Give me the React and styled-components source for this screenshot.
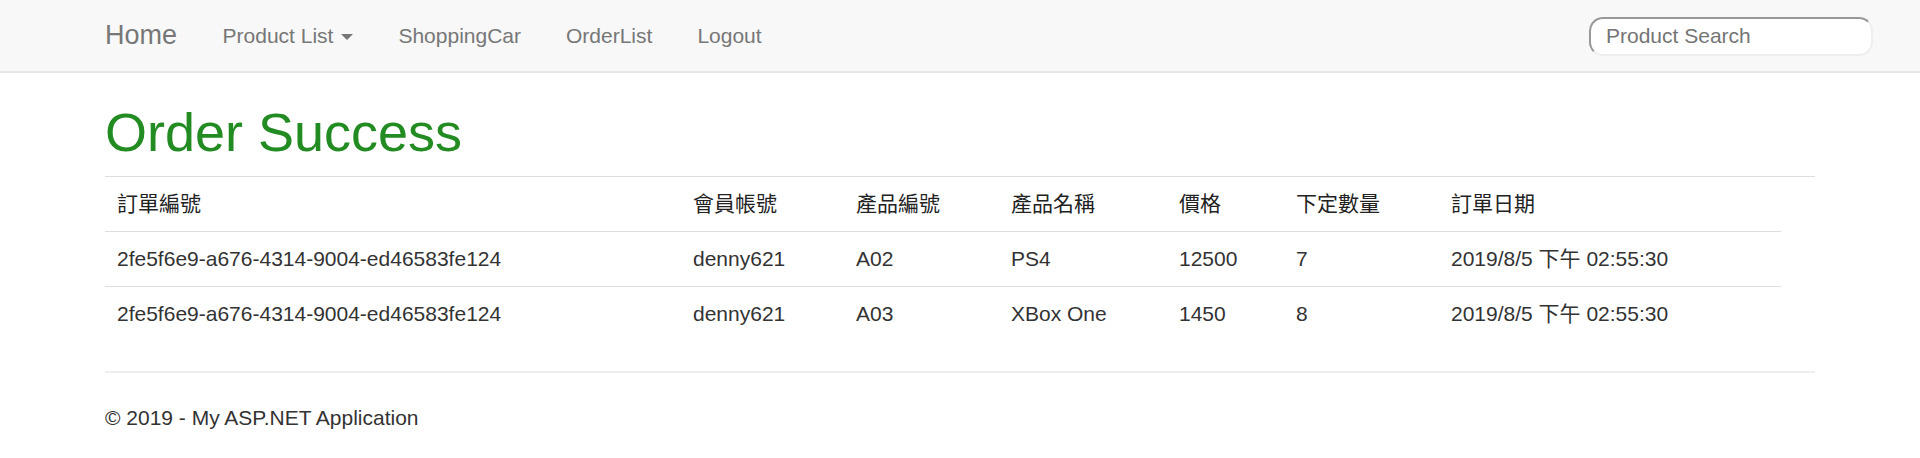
import React from "react";
import styled, { createGlobalStyle } from "styled-components";

const Global = createGlobalStyle`
  html, body { margin: 0; padding: 0; background: #fff; }
  body {
    font-family: "Liberation Sans", Arial, "Noto Sans CJK TC", sans-serif;
    font-size: 21px;
    line-height: 30px;
    color: #333;
  }
  * { box-sizing: border-box; }
`;

const NavBar = styled.nav`
  height: 73px;
  background: #f8f8f8;
  border-bottom: 2px solid #e7e7e7;
  display: flex;
  align-items: center;
  padding: 0 47px 0 105px;
`;

const Brand = styled.a`
  font-size: 27px;
  line-height: 30px;
  color: #777;
  text-decoration: none;
  margin-top: -2px;
`;

const NavList = styled.ul`
  display: flex;
  list-style: none;
  margin: 0 0 0 23px;
  padding: 0;
  flex: 1;
`;

const NavLink = styled.a`
  display: flex;
  align-items: center;
  padding: 0 22.5px;
  color: #777;
  font-size: 21px;
  line-height: 30px;
  text-decoration: none;
`;

const Caret = styled.span`
  display: inline-block;
  width: 0;
  height: 0;
  margin-left: 8px;
  margin-top: 2px;
  border-top: 6px solid #777;
  border-left: 6px solid transparent;
  border-right: 6px solid transparent;
`;

const Search = styled.input`
  width: 284px;
  height: 39px;
  margin-top: 1px;
  padding: 0 15px;
  font-family: "Liberation Sans", Arial, sans-serif;
  font-size: 21px;
  color: #333;
  background: #fff;
  border: 2px solid;
  border-color: #999 #eee #eee #999;
  border-radius: 14px;
  outline: none;
  &::placeholder { color: #757575; }
`;

const Body = styled.main`
  padding: 0 105px;
`;

const Title = styled.h1`
  margin: 30px 0 14px;
  font-size: 54px;
  line-height: 59.4px;
  font-weight: 400;
  color: #228b22;
`;

const Rule = styled.hr`
  margin: 0;
  border: 0;
  border-top: ${(p) => (p.$light ? "2px solid #eee" : "1px solid #ddd")};
`;

const Table = styled.table`
  width: 1676px;
  border-collapse: collapse;
  margin-bottom: 30px;
`;

const Th = styled.th`
  text-align: left;
  font-weight: 400;
  padding: 12px 12px;
  line-height: 30px;
  color: #222;
  font-family: "Liberation Sans", "Noto Sans CJK TC", sans-serif;
  border-bottom: 1px solid #ddd;
  white-space: nowrap;
`;

const Td = styled.td`
  padding: 12px 12px;
  line-height: 30px;
  color: #333;
  white-space: nowrap;
  border-bottom: ${(p) => (p.$last ? "0" : "1px solid #ddd")};
`;

const Footer = styled.footer`
  margin: 30px 0 15px;
  line-height: 30px;
`;

const cols = [576, 163, 155, 168, 117, 155, 342];
const heads = ["訂單編號", "會員帳號", "產品編號", "產品名稱", "價格", "下定數量", "訂單日期"];
const rows = [
  ["2fe5f6e9-a676-4314-9004-ed46583fe124", "denny621", "A02", "PS4", "12500", "7", "2019/8/5 下午 02:55:30"],
  ["2fe5f6e9-a676-4314-9004-ed46583fe124", "denny621", "A03", "XBox One", "1450", "8", "2019/8/5 下午 02:55:30"],
];

export default function App() {
  return (
    <>
      <Global />
      <NavBar>
        <Brand href="#">Home</Brand>
        <NavList>
          <li>
            <NavLink href="#">
              Product List<Caret />
            </NavLink>
          </li>
          <li><NavLink href="#">ShoppingCar</NavLink></li>
          <li><NavLink href="#">OrderList</NavLink></li>
          <li><NavLink href="#">Logout</NavLink></li>
        </NavList>
        <Search placeholder="Product Search" />
      </NavBar>
      <Body>
        <Title>Order Success</Title>
        <Rule />
        <Table>
          <colgroup>
            {cols.map((w, i) => (
              <col key={i} style={{ width: w }} />
            ))}
          </colgroup>
          <thead>
            <tr>
              {heads.map((h) => (
                <Th key={h}>{h}</Th>
              ))}
            </tr>
          </thead>
          <tbody>
            {rows.map((r, ri) => (
              <tr key={ri}>
                {r.map((c, ci) => (
                  <Td key={ci} $last={ri === rows.length - 1}>{c}</Td>
                ))}
              </tr>
            ))}
          </tbody>
        </Table>
        <Rule $light />
        <Footer>© 2019 - My ASP.NET Application</Footer>
      </Body>
    </>
  );
}
